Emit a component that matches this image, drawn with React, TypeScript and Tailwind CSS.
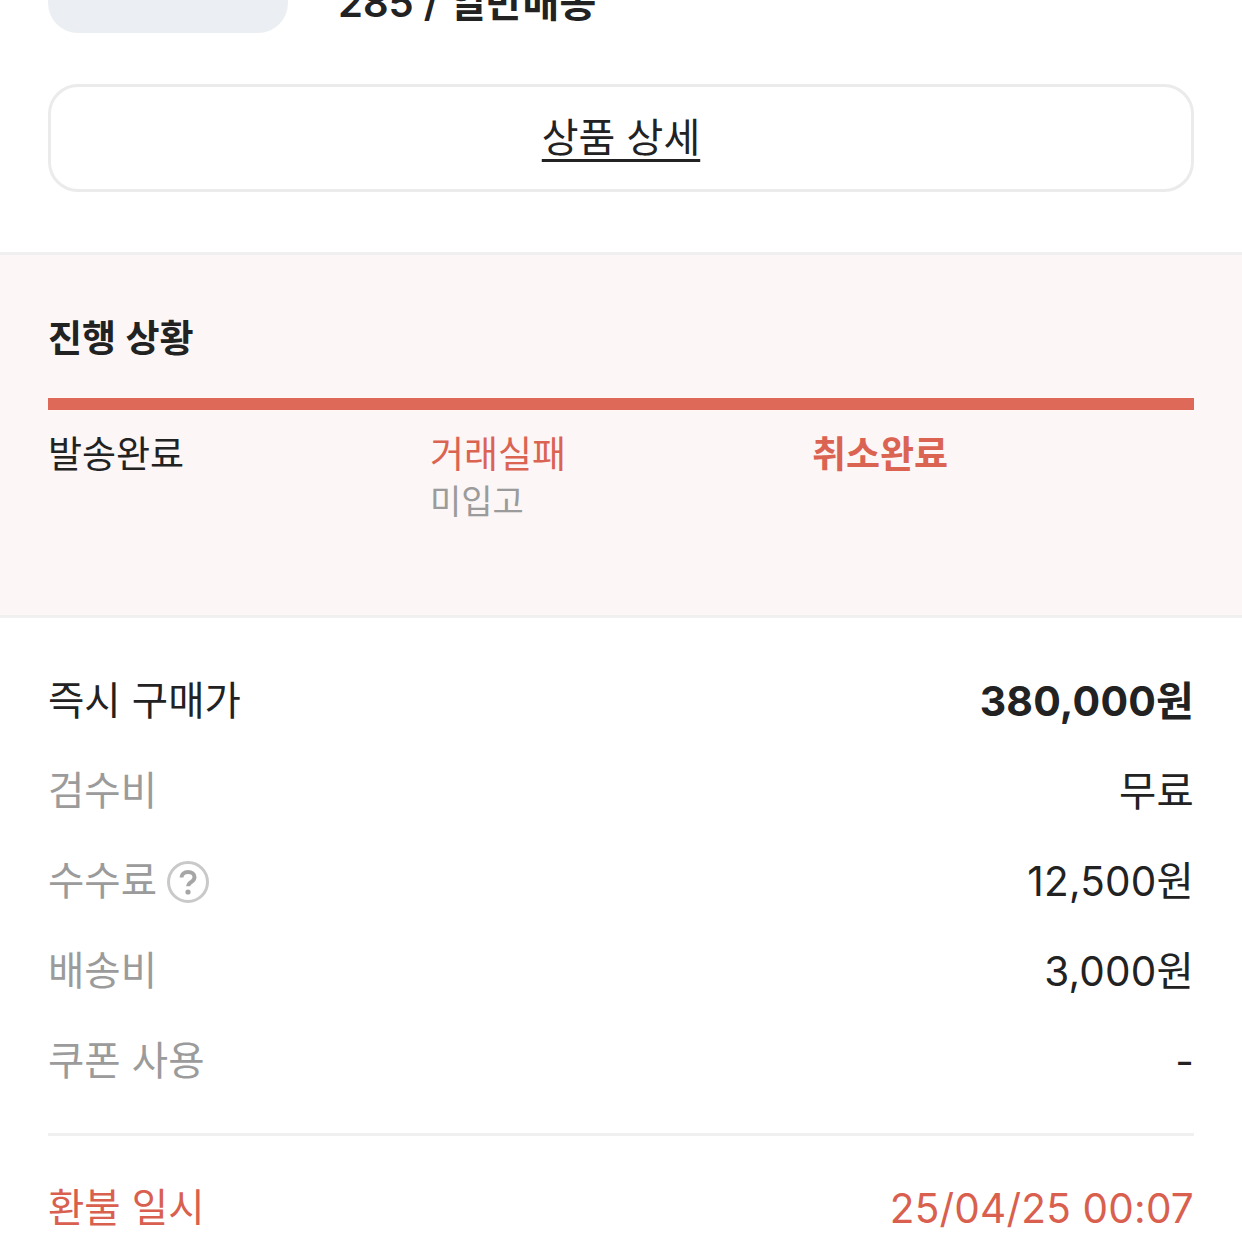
const font = "font-['Inter','Noto_Sans_CJK_KR',sans-serif]";

function Row({ label, value, help, strong }: { label: string; value: string; help?: boolean; strong?: boolean }) {
  return (
    <div className="flex h-[90px] items-center justify-between">
      <div className="flex items-center gap-2.5">
        <span className={strong ? "text-[39.5px] text-[#222222]" : "text-[39.5px] text-[#9b9b9b]"}>{label}</span>
        {help && (
          <svg width="42" height="42" viewBox="0 0 42 42" fill="none">
            <circle cx="21" cy="21" r="19.5" stroke="#c9c9c9" strokeWidth="3" />
            <path d="M14.5 16.500c0-3.400 2.800-5.500 6.500-5.500s6.500 2.100 6.500 5.200c0 2.500-1.500 3.700-3.300 4.900-1.900 1.300-3 2-3 4.200" stroke="#a6a6a6" strokeWidth="4" />
            <circle cx="21" cy="31" r="2.600" fill="#a6a6a6" />
          </svg>
        )}
      </div>
      <span className={strong ? "text-[41px] font-bold tracking-[0.2px] text-[#222222]" : "text-[40.5px] tracking-[0.2px] text-[#222222]"}>{value}</span>
    </div>
  );
}

export default function App() {
  return (
    <div className={`${font} h-[1242px] w-[1242px] overflow-hidden bg-white text-[#222222]`}>
      <div className="flex h-[33px] items-end px-12">
        <div className="h-[33px] w-[240px] rounded-b-[30px] bg-[#ebeef2]" />
        <div className="ml-[50px] self-end pb-[7px] text-[40px] font-semibold leading-[46px]">285 / 일반배송</div>
      </div>

      <div className="px-12 pt-[51px]">
        <button className="flex h-[108px] w-full items-center justify-center rounded-[30px] border-[3px] border-[#ebebeb] bg-white text-[40px] leading-none underline decoration-[3px] underline-offset-[7px]">
          상품 상세
        </button>
      </div>

      <section className="mt-[60px] h-[366px] border-y-[3px] border-[#f0f0f0] bg-[#fcf6f6] px-12 pt-[62px]">
        <h2 className="text-[37px] font-semibold leading-[44px]">진행 상황</h2>
        <div className="mt-[37px] h-3 bg-[#de6959]" />
        <div className="mt-[22px] grid grid-cols-3 text-[37px] leading-[46px]">
          <div>발송완료</div>
          <div>
            <div className="text-[#db6352]">거래실패</div>
            <div className="text-[34px] leading-[48px] text-[#9b9b9b]">미입고</div>
          </div>
          <div className="font-bold text-[#db6352]">취소완료</div>
        </div>
      </section>

      <section className="px-12 pt-[39px]">
        <Row label="즉시 구매가" value="380,000원" strong />
        <Row label="검수비" value="무료" />
        <Row label="수수료" value="12,500원" help />
        <Row label="배송비" value="3,000원" />
        <Row label="쿠폰 사용" value="-" />
        <div className="mt-[26px] h-[3px] bg-[#f0f0f0]" />
        <div className="flex h-[146px] items-center justify-between text-[#d9604f]">
          <span className="text-[39.5px]">환불 일시</span>
          <span className="text-[40.5px] tracking-[0.2px]">25/04/25 00:07</span>
        </div>
      </section>
    </div>
  );
}
